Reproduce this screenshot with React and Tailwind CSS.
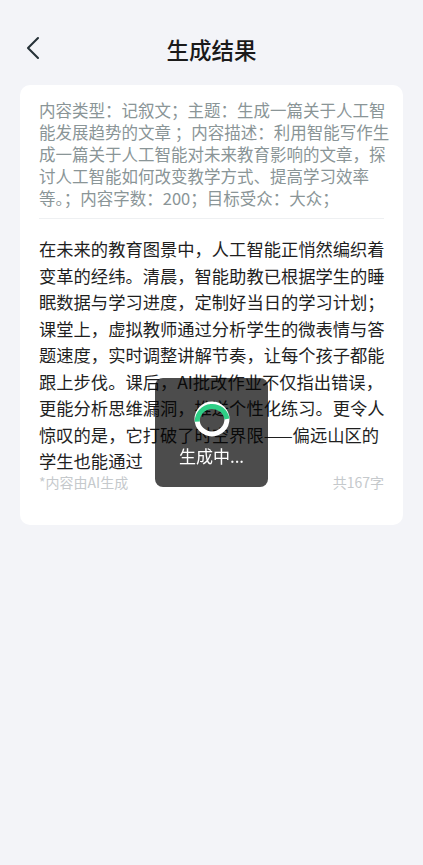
const PROMPT_LINES = [
  '内容类型：记叙文；主题：生成一篇关于人工智',
  '能发展趋势的文章 ；内容描述：利用智能写作生',
  '成一篇关于人工智能对未来教育影响的文章，探',
  '讨人工智能如何改变教学方式、提高学习效率',
  '等。；内容字数：200；目标受众：大众；',
];

const BODY_LINES = [
  '在未来的教育图景中，人工智能正悄然编织着',
  '变革的经纬。清晨，智能助教已根据学生的睡',
  '眠数据与学习进度，定制好当日的学习计划；',
  '课堂上，虚拟教师通过分析学生的微表情与答',
  '题速度，实时调整讲解节奏，让每个孩子都能',
  '跟上步伐。课后，AI批改作业不仅指出错误，',
  '更能分析思维漏洞，推送个性化练习。更令人',
  '惊叹的是，它打破了时空界限——偏远山区的',
  '学生也能通过',
];

function BackIcon() {
  return (
    <svg width="16" height="24" viewBox="0 0 16 24" fill="none">
      <path d="M13 2 L3 12 L13 22" stroke="#263238" strokeWidth="2.1" strokeLinecap="round" strokeLinejoin="round" />
    </svg>
  );
}

function Spinner() {
  // green arc on the upper half, white on the rest
  return (
    <svg width="36" height="36" viewBox="0 0 36 36">
      <circle cx="18" cy="18" r="15" fill="none" stroke="#ffffff" strokeWidth="5" />
      <path d="M3.2 20.6 A15 15 0 0 1 33 18" fill="none" stroke="#2fcf86" strokeWidth="5" />
    </svg>
  );
}

export default function App() {
  return (
    <div
      className="min-h-[865px] bg-[#f3f4f8] text-[#1f1f1f]"
      style={{ fontFamily: '"Noto Sans CJK SC", "Noto Sans", sans-serif' }}
    >
      <div className="pt-[15px]">
        <div className="relative h-[70px] flex items-center justify-center">
          <button className="absolute left-[25px] top-[21px]">
            <BackIcon />
          </button>
          <h1 className="text-[22.5px] font-medium text-[#1a1a1a]">生成结果</h1>
        </div>
      </div>

      <div className="mx-[20px] bg-white rounded-[10px] px-[19px] pt-[14px] pb-[36px]">
        <div className="text-[16.5px] leading-[22px] text-[#8a9597]">
          {PROMPT_LINES.map((l, i) => (
            <div key={i} className="whitespace-nowrap">{l}</div>
          ))}
        </div>
        <div className="mt-[9px] h-px bg-[#eef0f2]" />
        <div className="mt-[17px] text-[17.3px] leading-[26.5px] text-[#1f1f1f]">
          {BODY_LINES.map((l, i) => (
            <div key={i} className="whitespace-nowrap">{l}</div>
          ))}
        </div>
        <div className="flex justify-between text-[14px] leading-[14px] text-[#c5c9cc]">
          <span>*内容由AI生成</span>
          <span>共167字</span>
        </div>
      </div>

      <div className="fixed inset-0 flex items-center justify-center pointer-events-none">
        <div className="w-[113px] h-[109px] rounded-[8px] bg-black/70 flex flex-col items-center pt-[23px]">
          <Spinner />
          <div className="mt-[8px] text-[17px] leading-[22px] text-white">生成中...</div>
        </div>
      </div>
    </div>
  );
}
